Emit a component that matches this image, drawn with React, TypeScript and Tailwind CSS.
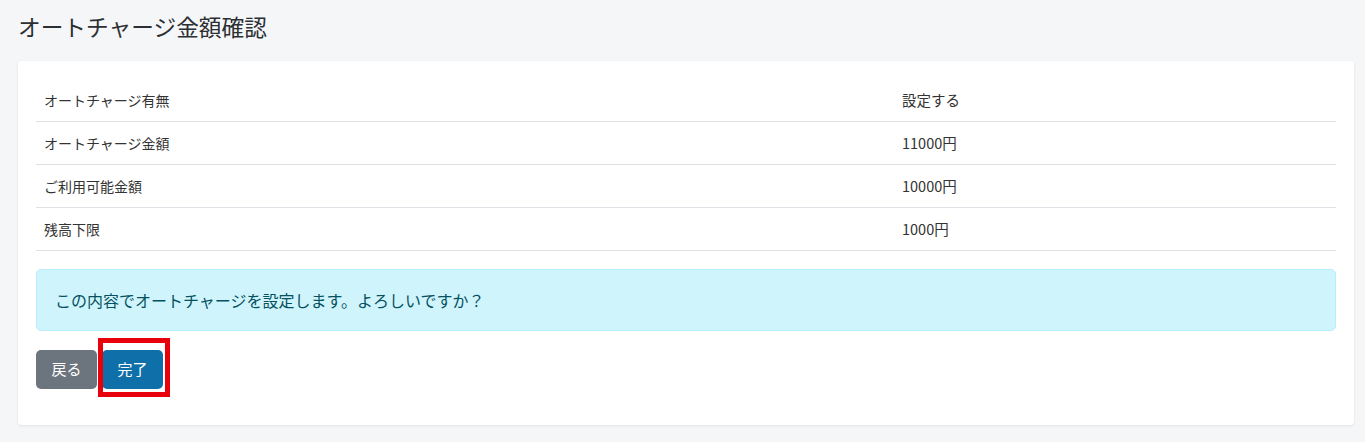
const rows = [
  { label: 'オートチャージ有無', value: '設定する' },
  { label: 'オートチャージ金額', value: '11000円' },
  { label: 'ご利用可能金額', value: '10000円' },
  { label: '残高下限', value: '1000円' },
];

const App = () => {
  return (
    <div className="min-h-[442px] bg-[#f5f6f8] px-[18px] pt-[13px] pb-4 text-[#212529] font-['Noto_Sans_CJK_JP','Noto_Sans',sans-serif]">
      <h1 className="text-[22.7px] leading-[28px] text-[#2b2f33]">オートチャージ金額確認</h1>

      <div className="mt-[20px] w-[1336px] rounded-[4px] bg-white px-[18px] pt-[18px] pb-[36px] shadow-[0_1px_3px_rgba(0,0,0,0.08)]">
        <table className="w-full text-[14px]">
          <tbody>
            {rows.map(r => (
              <tr key={r.label} className="border-b border-[#dee2e6]">
                <td className="w-[858px] px-2 py-[12px] leading-[18px] text-[#333]">{r.label}</td>
                <td className="px-2 py-[12px] leading-[18px] text-[14.5px] text-[#333]">{r.value}</td>
              </tr>
            ))}
          </tbody>
        </table>

        <div className="mt-[18px] rounded-[5px] border border-[#b6effb] bg-[#cff4fc] px-[18px] py-[19px] text-[16px] leading-[22px] text-[#055160]">
          この内容でオートチャージを設定します。よろしいですか？
        </div>

        <div className="mt-[19px] flex gap-[5px]">
          <button className="h-[39px] w-[61px] rounded-[5px] bg-[#6c757d] text-[15px] text-white">戻る</button>
          <div className="relative">
            <button className="h-[39px] w-[61px] rounded-[5px] bg-[#0f6fa8] text-[15px] text-white">完了</button>
            <div className="pointer-events-none absolute left-[-4px] top-[-12px] h-[59px] w-[72px] border-[5px] border-[#e8000b]" />
          </div>
        </div>
      </div>
    </div>
  );
};

export default App;
